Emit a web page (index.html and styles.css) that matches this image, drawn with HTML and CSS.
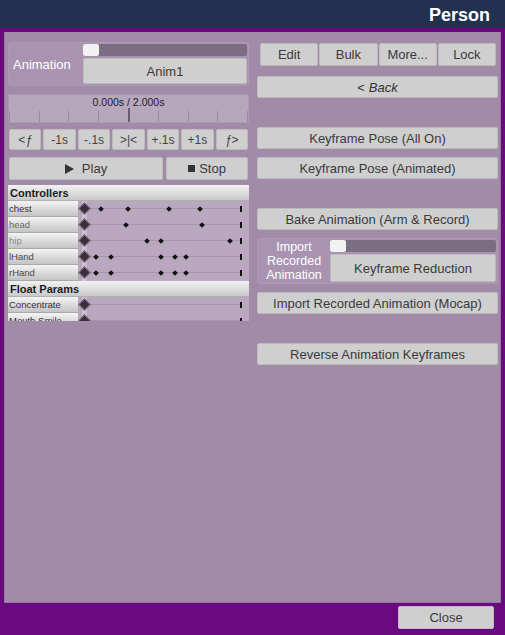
FILE: index.html
```html
<!DOCTYPE html>
<html>
<head>
<meta charset="utf-8">
<link rel="stylesheet" href="styles.css">
</head>
<body>
<div class="header"><span class="title">Person</span></div>
<div class="panel">
  <div class="left">
    <div class="group anim-group">
      <div class="group-label">Animation</div>
      <div class="group-controls">
        <div class="slider"><div class="knob"></div></div>
        <div class="btn tall">Anim1</div>
      </div>
    </div>
    <div class="timeline">
      <div class="time-text">0.000s / 2.000s</div>
      <div class="ticks">
        <div class="tick"></div><div class="tick"></div><div class="tick"></div><div class="tick major"></div>
        <div class="tick"></div><div class="tick"></div><div class="tick"></div><div class="tick"></div>
      </div>
    </div>
    <div class="step-row">
      <div class="btn step">&lt;<i>ƒ</i></div>
      <div class="btn step">-1s</div>
      <div class="btn step">-.1s</div>
      <div class="btn step">&gt;|&lt;</div>
      <div class="btn step">+.1s</div>
      <div class="btn step">+1s</div>
      <div class="btn step"><i>ƒ</i>&gt;</div>
    </div>
    <div class="play-row">
      <div class="btn play"><span class="tri"></span>Play</div>
      <div class="btn stop"><span class="sq"></span>Stop</div>
    </div>
    <div class="tracks">
      <div class="sec-head">Controllers</div>
      <div class="trow"><div class="tlabel c1">chest</div><div class="tline"><span class="kf big" style="left:5px"></span><span class="kf" style="left:23px"></span><span class="kf" style="left:50px"></span><span class="kf" style="left:91px"></span><span class="kf" style="left:122px"></span><span class="end"></span></div></div>
      <div class="trow"><div class="tlabel c2">head</div><div class="tline"><span class="kf big" style="left:5px"></span><span class="kf" style="left:48px"></span><span class="kf" style="left:124px"></span><span class="end"></span></div></div>
      <div class="trow"><div class="tlabel c3">hip</div><div class="tline"><span class="kf big" style="left:5px"></span><span class="kf" style="left:69px"></span><span class="kf" style="left:83px"></span><span class="kf" style="left:152px"></span><span class="end"></span></div></div>
      <div class="trow"><div class="tlabel c4">lHand</div><div class="tline"><span class="kf big" style="left:5px"></span><span class="kf" style="left:18px"></span><span class="kf" style="left:33px"></span><span class="kf" style="left:83px"></span><span class="kf" style="left:97px"></span><span class="kf" style="left:108px"></span><span class="end"></span></div></div>
      <div class="trow"><div class="tlabel c4">rHand</div><div class="tline"><span class="kf big" style="left:5px"></span><span class="kf" style="left:18px"></span><span class="kf" style="left:33px"></span><span class="kf" style="left:83px"></span><span class="kf" style="left:97px"></span><span class="kf" style="left:108px"></span><span class="end"></span></div></div>
      <div class="sec-head">Float Params</div>
      <div class="trow"><div class="tlabel c1">Concentrate</div><div class="tline"><span class="kf big" style="left:5px"></span><span class="end"></span></div></div>
      <div class="trow"><div class="tlabel c1">Mouth Smile</div><div class="tline"><span class="kf big" style="left:5px"></span><span class="end"></span></div></div>
    </div>
  </div>
  <div class="right">
    <div class="top-row">
      <div class="btn">Edit</div>
      <div class="btn">Bulk</div>
      <div class="btn">More...</div>
      <div class="btn">Lock</div>
    </div>
    <div class="btn wide back">&lt; <i>Back</i></div>
    <div class="btn wide gap-lg">Keyframe Pose (All On)</div>
    <div class="btn wide gap-sm">Keyframe Pose (Animated)</div>
    <div class="btn wide gap-lg">Bake Animation (Arm &amp; Record)</div>
    <div class="group import-group">
      <div class="group-label small">Import<br>Recorded<br>Animation</div>
      <div class="group-controls">
        <div class="slider"><div class="knob"></div></div>
        <div class="btn tall">Keyframe Reduction</div>
      </div>
    </div>
    <div class="btn wide gap-sm">Import Recorded Animation (Mocap)</div>
    <div class="btn wide gap-lg">Reverse Animation Keyframes</div>
  </div>
</div>
<div class="footer">
  <div class="btn close">Close</div>
</div>
</body>
</html>
```
FILE: styles.css
```css
html, body {
  margin: 0;
  padding: 0;
}
body {
  width: 505px;
  height: 635px;
  background: #6b0a80;
  font-family: "Liberation Sans", Arial, sans-serif;
  overflow: hidden;
}
.header {
  height: 28px;
  background: #22314f;
  display: flex;
  justify-content: flex-end;
  align-items: center;
  padding-right: 15px;
}
.title {
  color: #fff;
  font-weight: bold;
  font-size: 18px;
  margin-top: 2px;
}
.panel {
  margin: 4px 4px 0 4px;
  height: 571px;
  box-sizing: border-box;
  background: #a18ba9;
  padding: 9px 2px 0 3px;
  display: flex;
  gap: 8px;
  border: 1px solid #8f7a97;
  border-top-color: #9e88a6;
}
.left {
  width: 242px;
  display: flex;
  flex-direction: column;
}
.right {
  width: 242px;
  display: flex;
  flex-direction: column;
}
.btn {
  background: #cfcfcf;
  border: 1px solid #bcbcbc;
  border-radius: 2px;
  box-sizing: border-box;
  color: #3a3a3a;
  font-size: 13px;
  display: flex;
  align-items: center;
  justify-content: center;
  height: 22px;
}
.group {
  display: flex;
  background: #a993b1;
  border: 1px solid #ad99b5;
  border-radius: 3px;
  box-sizing: border-box;
}
.anim-group {
  height: 44px;
}
.group-label {
  width: 74px;
  color: #fff;
  font-size: 13px;
  display: flex;
  align-items: center;
  padding-left: 4px;
  box-sizing: border-box;
}
.group-label.small {
  justify-content: center;
  text-align: center;
  padding-left: 0;
  line-height: 14px;
  font-size: 12.5px;
}
.group-controls {
  flex: 1;
  display: flex;
  flex-direction: column;
  padding: 1px 1px 1px 0;
  gap: 2px;
}
.slider {
  height: 12px;
  background: #7b6d82;
  border-radius: 2px;
  position: relative;
}
.knob {
  position: absolute;
  left: 0;
  top: 0;
  width: 16px;
  height: 12px;
  background: #f2f2f2;
  border-radius: 2px;
}
.btn.tall {
  height: 27px;
  flex: 1;
}
.timeline {
  margin-top: 8px;
  height: 29px;
  background: #b6a7bd;
  border: 1px solid #aa98b2;
  box-sizing: border-box;
  display: flex;
  flex-direction: column;
}
.time-text {
  font-size: 10.5px;
  color: #222;
  text-align: center;
  height: 16px;
  line-height: 15px;
}
.ticks {
  flex: 1;
  display: flex;
  border-left: 1px solid #9c8aa3;
}
.tick {
  flex: 1;
  border-right: 1px solid #9c8aa3;
}
.tick.major {
  border-right: 2px solid #6a5c70;
  margin-top: -3px;
}
.step-row {
  margin-top: 6px;
  display: flex;
  gap: 2px;
  padding: 0 1px;
}
.btn.step {
  flex: 1;
  height: 21px;
  font-size: 12px;
  color: #444;
}
.play-row {
  margin-top: 7px;
  display: flex;
  gap: 3px;
  padding: 0 1px;
}
.btn.play {
  width: 154px;
  height: 23px;
  font-size: 13px;
}
.btn.stop {
  flex: 1;
  height: 23px;
}
.tri {
  width: 0;
  height: 0;
  border-left: 9px solid #333;
  border-top: 5px solid transparent;
  border-bottom: 5px solid transparent;
  margin-right: 8px;
}
.sq {
  width: 7px;
  height: 7px;
  background: #333;
  margin-right: 4px;
}
.tracks {
  margin-top: 5px;
  height: 136px;
  overflow: hidden;
  display: flex;
  flex-direction: column;
  background: #b9a8bf;
}
.sec-head {
  height: 16px;
  flex: none;
  background: linear-gradient(#f2f2f2, #c9c9c9);
  font-weight: bold;
  font-size: 11px;
  color: #1c1c1c;
  display: flex;
  align-items: center;
  padding-left: 2px;
  border-bottom: 1px solid #b0b0b0;
  box-sizing: border-box;
}
.trow {
  height: 16px;
  flex: none;
  display: flex;
}
.tlabel {
  width: 70px;
  box-sizing: border-box;
  background: linear-gradient(#f4f4f4, #c4c4c4);
  border-bottom: 1px solid #a8a8a8;
  font-size: 9.5px;
  display: flex;
  align-items: center;
  padding-left: 1px;
  overflow: hidden;
  white-space: nowrap;
}
.c1 { color: #333; }
.c2 { color: #666; }
.c3 { color: #8a8a8a; }
.c4 { color: #4a4a4a; }
.tline {
  flex: 1;
  position: relative;
  background: linear-gradient(90deg, transparent 4px, #cdbfd1 4px, #cdbfd1 9px, transparent 9px);
}
.tline::before {
  content: "";
  position: absolute;
  left: 5px;
  right: 8px;
  top: 7px;
  height: 1px;
  background: #a596aa;
}
.kf {
  position: absolute;
  top: 6px;
  width: 4px;
  height: 4px;
  margin-left: -2px;
  background: #111;
  transform: rotate(45deg);
}
.kf.big {
  top: 3px;
  width: 7px;
  height: 7px;
  margin-left: -3px;
  background: #3b2f3b;
  border: 1px solid #8a7a8a;
}
.end {
  position: absolute;
  left: 162px;
  top: 5px;
  width: 2px;
  height: 6px;
  background: #111;
}
.top-row {
  margin-top: 1px;
  display: flex;
  gap: 1px;
  padding: 0 2px 0 3px;
}
.top-row .btn {
  flex: 1;
  height: 23px;
  font-size: 13px;
}
.btn.wide {
  height: 22px;
}
.back {
  margin-top: 10px;
  color: #333;
}
.back i {
  margin-left: 4px;
}
.gap-lg {
  margin-top: 29px;
}
.gap-sm {
  margin-top: 8px;
}
.import-group {
  margin-top: 8px;
  height: 46px;
}
.import-group .group-label {
  width: 72px;
}
.footer {
  display: flex;
  justify-content: flex-end;
  padding: 3px 11px 0 0;
}
.btn.close {
  width: 96px;
  height: 23px;
  font-size: 13px;
}
```
